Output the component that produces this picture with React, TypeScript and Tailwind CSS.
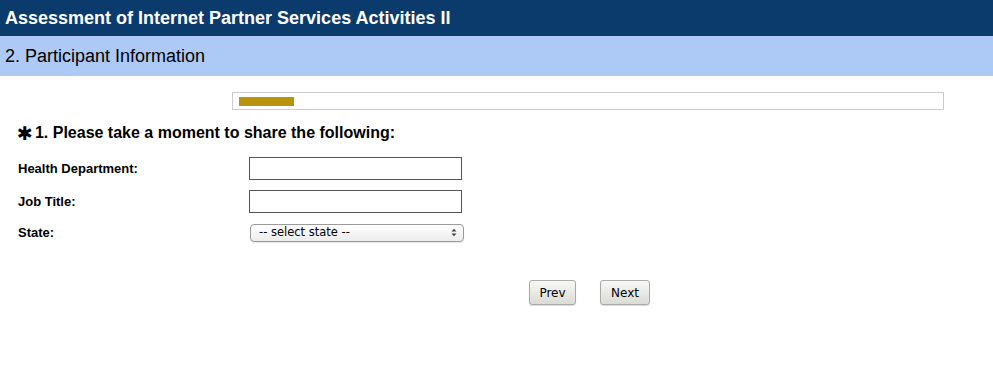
import React from "react";

export default function App() {
  return (
    <div className="w-[993px] h-[373px] bg-white overflow-hidden" style={{ fontFamily: '"Liberation Sans", Arial, sans-serif' }}>
      <div className="h-[36px] bg-[#0b3a6d] flex items-center pl-[5px]">
        <span className="text-white font-bold text-[18px] leading-none">Assessment of Internet Partner Services Activities II</span>
      </div>
      <div className="h-[40px] bg-[#adc9f5] flex items-center pl-[5px]">
        <span className="text-black text-[18px] leading-none">2. Participant Information</span>
      </div>
      <div className="pt-[16px] pl-[232px]">
        <div className="w-[712px] h-[18px] border border-[#cccccc] flex items-center pl-[6px]">
          <div className="w-[55px] h-[9px] bg-[#b8930b]" />
        </div>
      </div>
      <div className="pl-[17px] mt-[11px] flex items-center h-[24px]">
        <span className="text-[19px] font-bold leading-none text-black" style={{ fontFamily: '"DejaVu Sans", sans-serif' }}>✱</span>
        <span className="text-[16px] font-bold leading-none text-black ml-[2px]">1. Please take a moment to share the following:</span>
      </div>
      <div className="pl-[18px] mt-[12px] flex flex-col">
        <div className="flex items-center h-[23px]">
          <span className="w-[231px] text-[13px] font-bold text-black">Health Department:</span>
          <div className="w-[213px] h-[23px] border border-[#555] bg-white" />
        </div>
        <div className="flex items-center h-[23px] mt-[10px]">
          <span className="w-[231px] text-[13px] font-bold text-black">Job Title:</span>
          <div className="w-[213px] h-[23px] border border-[#555] bg-white" />
        </div>
        <div className="flex items-center h-[19px] mt-[10px]">
          <span className="w-[232px] text-[13px] font-bold text-black">State:</span>
          <div className="w-[214px] h-[18px] border border-[#9a9a9a] rounded-[4px] bg-gradient-to-b from-white to-[#ececec] flex items-center justify-between pl-[8px] pr-[6px] shadow-[0_1px_1px_rgba(0,0,0,0.1)]">
            <span className="text-[11.5px] text-black leading-none" style={{ fontFamily: '"DejaVu Sans", sans-serif' }}>-- select state --</span>
            <svg width="6" height="9" viewBox="0 0 6 9">
              <path d="M0.5 3.5 L3 0.8 L5.5 3.5 Z" fill="#444" />
              <path d="M0.5 5.5 L3 8.2 L5.5 5.5 Z" fill="#444" />
            </svg>
          </div>
        </div>
      </div>
      <div className="pl-[529px] pt-[38px] flex gap-[24px]">
        <div className="w-[47px] h-[25px] rounded-[3px] border border-[#a9a9a9] bg-gradient-to-b from-[#f7f7f4] to-[#dcdcd6] flex items-center justify-center shadow-[0_1px_1px_rgba(0,0,0,0.15)]">
          <span className="text-[12px] text-black leading-none" style={{ fontFamily: '"DejaVu Sans", sans-serif' }}>Prev</span>
        </div>
        <div className="w-[50px] h-[25px] rounded-[3px] border border-[#a9a9a9] bg-gradient-to-b from-[#f7f7f4] to-[#dcdcd6] flex items-center justify-center shadow-[0_1px_1px_rgba(0,0,0,0.15)]">
          <span className="text-[12px] text-black leading-none" style={{ fontFamily: '"DejaVu Sans", sans-serif' }}>Next</span>
        </div>
      </div>
    </div>
  );
}
